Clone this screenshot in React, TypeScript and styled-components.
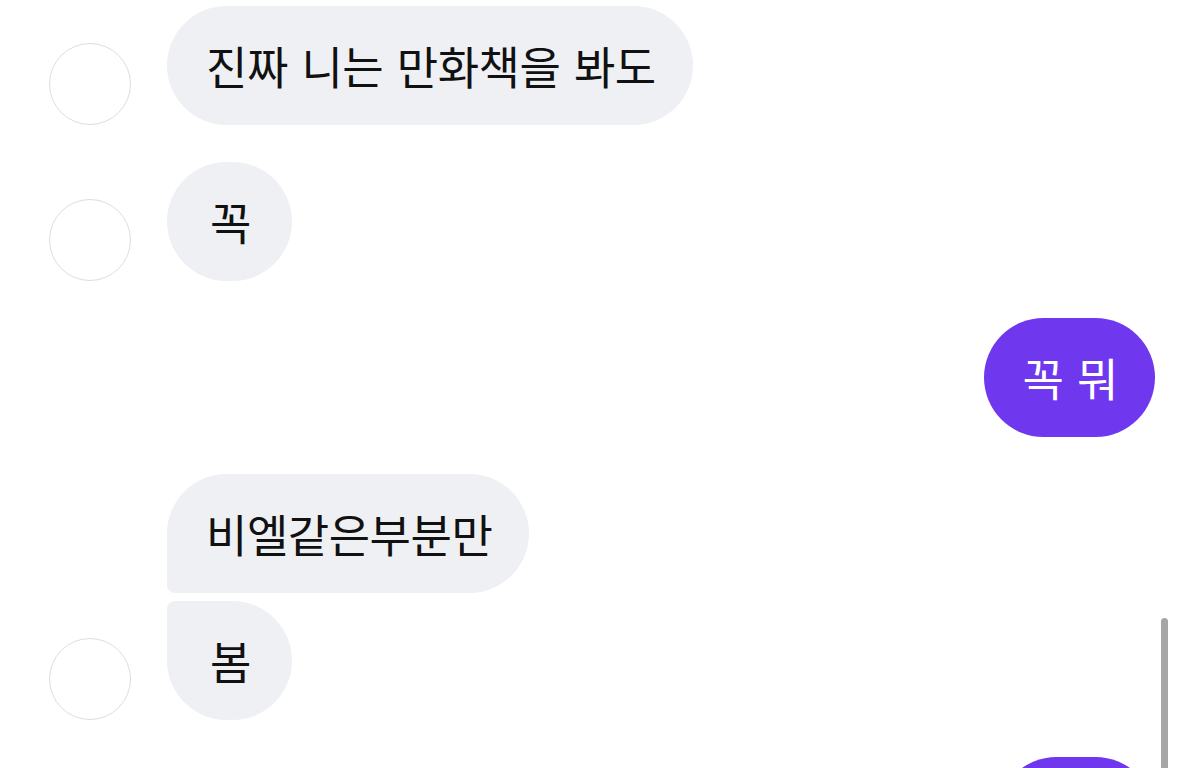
import React from "react";
import styled, { createGlobalStyle } from "styled-components";

const Global = createGlobalStyle`
  html, body { margin: 0; padding: 0; background: #ffffff; overflow: hidden; }
  body { font-family: "Noto Sans CJK KR", "Noto Sans", sans-serif; }
`;

const Screen = styled.div`
  position: relative;
  width: 1179px;
  height: 768px;
  overflow: hidden;
  background: #ffffff;
`;

const Thread = styled.div`
  display: flex;
  flex-direction: column;
  gap: 37px;
  padding: 6px 24px 0 49px;
`;

const Row = styled.div<{ $mine?: boolean }>`
  display: flex;
  align-items: flex-end;
  justify-content: ${(p) => (p.$mine ? "flex-end" : "flex-start")};
  gap: 36px;
`;

const Avatar = styled.div`
  flex: none;
  width: 80px;
  height: 80px;
  border-radius: 50%;
  border: 1.5px solid #dddddd;
  background: #fff;
`;

const Stack = styled.div`
  display: flex;
  flex-direction: column;
  align-items: flex-start;
  gap: 8px;
`;

type Corner = "none" | "bottom" | "top";

const Bubble = styled.div<{ $mine?: boolean; $tail?: Corner }>`
  box-sizing: border-box;
  height: 119px;
  min-width: 125px;
  padding: 0 37px 0 39px;
  display: flex;
  align-items: center;
  justify-content: center;
  border-radius: 60px;
  ${(p) => (p.$tail === "bottom" ? "border-bottom-left-radius: 8px;" : "")}
  ${(p) => (p.$tail === "top" ? "border-top-left-radius: 8px;" : "")}
  background: ${(p) => (p.$mine ? "#7038ee" : "#eff0f4")};
  color: ${(p) => (p.$mine ? "#ffffff" : "#111111")};
  font-family: "Noto Sans CJK KR", "Noto Sans", sans-serif;
  font-size: 45px;
  letter-spacing: -0.5px;
  word-spacing: 4px;
  line-height: 54px;
  white-space: nowrap;
`;

const Scrollbar = styled.div`
  position: absolute;
  left: 1161px;
  top: 618px;
  width: 7px;
  height: 170px;
  border-radius: 4px;
  background: #a6a6a6;
`;

export default function App() {
  return (
    <Screen>
      <Global />
      <Thread>
        <Row>
          <Avatar />
          <Bubble>진짜 니는 만화책을 봐도</Bubble>
        </Row>
        <Row>
          <Avatar />
          <Bubble>꼭</Bubble>
        </Row>
        <Row $mine>
          <Bubble $mine>꼭 뭐</Bubble>
        </Row>
        <Row>
          <Avatar />
          <Stack>
            <Bubble $tail="bottom">비엘같은부분만</Bubble>
            <Bubble $tail="top">봄</Bubble>
          </Stack>
        </Row>
        <Row $mine>
          <Bubble $mine>ㅋㅋ</Bubble>
        </Row>
      </Thread>
      <Scrollbar />
    </Screen>
  );
}
